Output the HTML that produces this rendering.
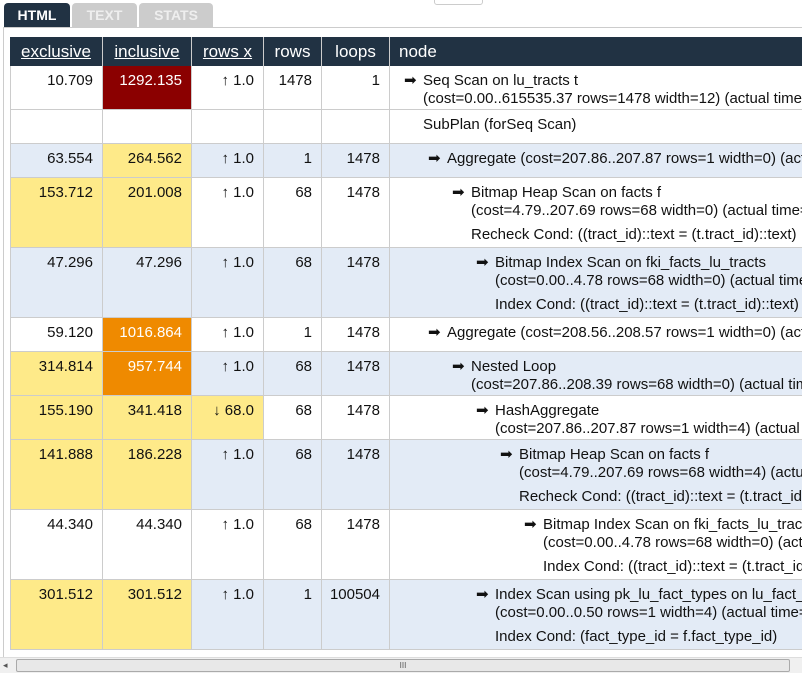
<!DOCTYPE html>
<html><head><meta charset="utf-8"><style>
*{margin:0;padding:0;box-sizing:border-box}
body{width:802px;height:673px;overflow:hidden;background:#fff;font-family:"Liberation Sans",Arial,sans-serif;font-size:15px;color:#111;position:relative}
.tab{position:absolute;top:3px;height:25px;font-weight:bold;font-size:14px;text-align:center;line-height:25px;border-radius:4px 4px 0 0}
.frame{position:absolute;left:3px;top:27px;width:810px;height:640px;border:1px solid #ccc}
.c{position:absolute;border-right:1px solid #ccc;border-bottom:1px solid #ccc;white-space:nowrap;overflow:hidden;padding:6px 9px 0 0;text-align:right;line-height:18px}
.h{position:absolute;top:37px;height:29px;background:#213243;color:#fff;font-size:17px;line-height:29px;text-align:center;border-right:1px solid #ccc}
.h u{text-decoration:underline}
.n{text-align:left;padding-right:0}
.a{display:inline-block;width:19px}
.cond{margin-top:6px}
</style></head><body>
<div class="tab" style="left:4px;width:66px;background:#213243;color:#fff">HTML</div>
<div class="tab" style="left:72px;width:65px;background:#ccc;color:#eee">TEXT</div>
<div class="tab" style="left:139px;width:74px;background:#ccc;color:#eee">STATS</div>
<div style="position:absolute;left:434px;top:-4px;width:49px;height:9px;border:1px solid #ccc;border-radius:3px"></div>
<div class="frame"></div>
<div class="h" style="left:10px;width:93px"><u>exclusive</u></div>
<div class="h" style="left:103px;width:89px"><u>inclusive</u></div>
<div class="h" style="left:192px;width:72px"><u>rows x</u></div>
<div class="h" style="left:264px;width:58px">rows</div>
<div class="h" style="left:322px;width:68px">loops</div>
<div class="h" style="left:390px;width:412px;text-align:left;padding-left:9px;border-right:0">node</div>
<div id="rows"></div>
<script>
var W='#fff',B='#e3ebf6',Y='#feea89',O='#ef8a00',R='#8b0000';
var rows=[
[66,44,W,'10.709',W,'1292.135',R,'↑ 1.0',W,'1478','1',404,['Seq Scan on lu_tracts t','(cost=0.00..615535.37 rows=1478 width=12) (actual time=0.080..1292.135 rows=1478 loops=1)'],null],
[110,34,W,'',W,'',W,'',W,'','',404,null,'SubPlan (forSeq Scan)'],
[144,34,B,'63.554',B,'264.562',Y,'↑ 1.0',B,'1','1478',428,['Aggregate (cost=207.86..207.87 rows=1 width=0) (actual time=0.178..0.179 rows=1 loops=1478)'],null],
[178,70,W,'153.712',Y,'201.008',Y,'↑ 1.0',W,'68','1478',452,['Bitmap Heap Scan on facts f','(cost=4.79..207.69 rows=68 width=0) (actual time=0.036..0.136 rows=68 loops=1478)'],'Recheck Cond: ((tract_id)::text = (t.tract_id)::text)'],
[248,70,B,'47.296',B,'47.296',B,'↑ 1.0',B,'68','1478',476,['Bitmap Index Scan on fki_facts_lu_tracts','(cost=0.00..4.78 rows=68 width=0) (actual time=0.032..0.032 rows=68 loops=1478)'],'Index Cond: ((tract_id)::text = (t.tract_id)::text)'],
[318,34,W,'59.120',W,'1016.864',O,'↑ 1.0',W,'1','1478',428,['Aggregate (cost=208.56..208.57 rows=1 width=0) (actual time=0.688..0.688 rows=1 loops=1478)'],null],
[352,44,B,'314.814',Y,'957.744',O,'↑ 1.0',B,'68','1478',452,['Nested Loop','(cost=207.86..208.39 rows=68 width=0) (actual time=0.143..0.648 rows=68 loops=1478)'],null],
[396,44,W,'155.190',Y,'341.418',Y,'↓ 68.0',Y,'68','1478',476,['HashAggregate','(cost=207.86..207.87 rows=1 width=4) (actual time=0.126..0.231 rows=68 loops=1478)'],null],
[440,70,B,'141.888',Y,'186.228',Y,'↑ 1.0',B,'68','1478',500,['Bitmap Heap Scan on facts f','(cost=4.79..207.69 rows=68 width=4) (actual time=0.036..0.126 rows=68 loops=1478)'],'Recheck Cond: ((tract_id)::text = (t.tract_id)::text)'],
[510,70,W,'44.340',W,'44.340',W,'↑ 1.0',W,'68','1478',524,['Bitmap Index Scan on fki_facts_lu_tracts','(cost=0.00..4.78 rows=68 width=0) (actual time=0.030..0.030 rows=68 loops=1478)'],'Index Cond: ((tract_id)::text = (t.tract_id)::text)'],
[580,70,B,'301.512',Y,'301.512',Y,'↑ 1.0',B,'1','100504',476,['Index Scan using pk_lu_fact_types on lu_fact_types','(cost=0.00..0.50 rows=1 width=4) (actual time=0.003..0.003 rows=1 loops=100504)'],'Index Cond: (fact_type_id = f.fact_type_id)']
];
var cols=[[10,93],[103,89],[192,72],[264,58],[322,68]];
var h='';
rows.forEach(function(r){
 var t=r[0],ht=r[1],bg=r[2];
 var vals=[[r[3],r[4]],[r[5],r[6]],[r[7],r[8]],[r[9],bg],[r[10],bg]];
 vals.forEach(function(v,i){
  var fg=(v[1]==R||v[1]==O)?'#fff':'#111';
  var st=i==0?'border-left:1px solid #ccc;':'';
  h+='<div class="c" style="'+st+'left:'+cols[i][0]+'px;top:'+t+'px;width:'+cols[i][1]+'px;height:'+ht+'px;background:'+v[1]+';color:'+fg+'">'+v[0]+'</div>';
 });
 var x=r[11]-390,inner='';
 if(r[12]){inner+='<div style="padding-left:'+(x)+'px"><span class="a">➡</span>'+r[12][0]+'</div>';
  for(var k=1;k<r[12].length;k++)inner+='<div style="padding-left:'+(x+19)+'px">'+r[12][k]+'</div>';}
 if(r[13])inner+='<div class="'+(r[12]?'cond':'')+'" style="padding-left:'+(x+19)+'px;'+(r[12]?'':'margin-top:0')+'">'+r[13]+'</div>';
 h+='<div class="c n" style="left:390px;top:'+t+'px;width:412px;height:'+ht+'px;background:'+bg+';border-right:0">'+inner+'</div>';
});
document.getElementById('rows').innerHTML=h;
</script>
<div style="position:absolute;left:0;top:657px;width:802px;height:16px;background:#f0f0f0;border-top:1px solid #ddd"></div>
<div style="position:absolute;left:3px;top:660px;font-size:9px;color:#555">◂</div>
<div style="position:absolute;left:16px;top:659px;width:774px;height:13px;background:#e8e8e8;border:1px solid #aaa;border-radius:2px;text-align:center;font-size:8px;line-height:11px;color:#555">III</div>
</body></html>
